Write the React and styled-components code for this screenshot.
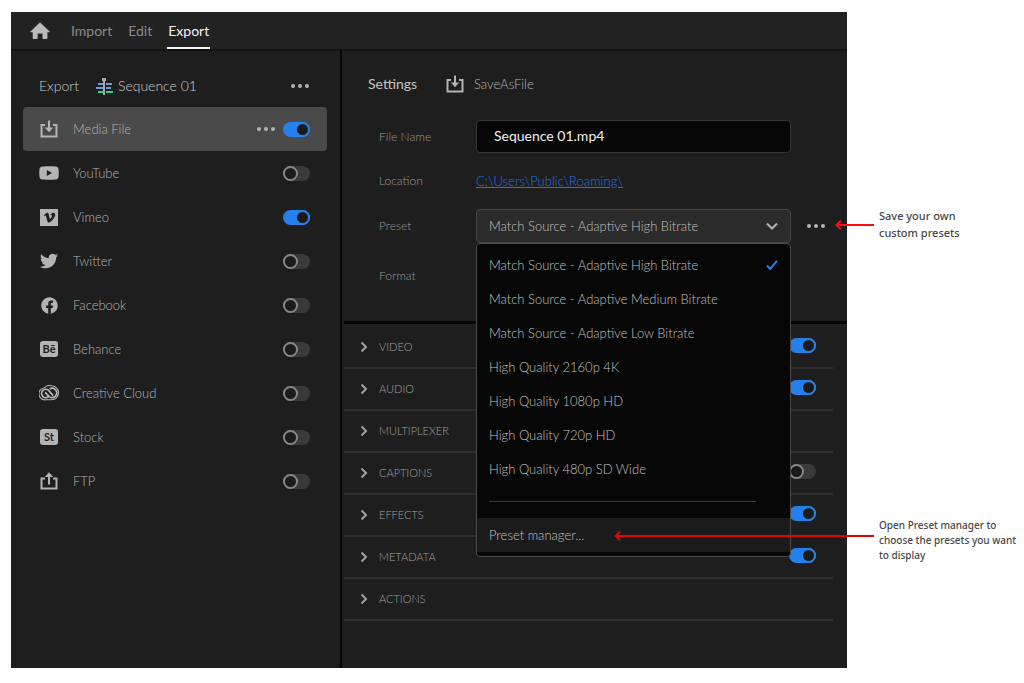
import React, { useState } from 'react';
import styled, { createGlobalStyle } from 'styled-components';
import { FaFacebook, FaTwitter, FaVimeoV } from 'react-icons/fa';

const sans = "Lato, 'Open Sans', sans-serif";

const GlobalStyle = createGlobalStyle`
  *, *::before {
    box-sizing: border-box;
  }
  body {
    margin: 0;
    background: #fff;
    font-family: ${sans};
    font-size: 13px;
    line-height: 20px;
  }
  button, input, select {
    font-family: inherit;
    font-size: inherit;
    line-height: inherit;
  }
`;

/* icons */

const HomeIcon = () => (
  <svg width='20' height='18' viewBox='0 0 20 18' fill='#b9b9b9' aria-hidden='true'>
    <path d='M10 .6a1 1 0 0 1 .7.3l8.9 8.5c.3.4.1.9-.4.9h-1.8v5.9c0 .5-.3.8-.8.8h-3.4a.7.7 0 0 1-.7-.7v-4.7H7.6v4.7a.7.7 0 0 1-.7.7H3.5c-.5 0-.8-.3-.8-.8v-5.900H.9c-.6 0-.8-.5-.4-.9L9.300.9a1 1 0 0 1 .7-.3z' />
  </svg>
);

const SaveIcon = () => (
  <svg width='18' height='18' viewBox='0 0 18 18' fill='none' stroke='#b4b4b4' strokeWidth='2' aria-hidden='true'>
    <path d='M5 5H1.5v11.500h15V5H13' />
    <path d='M9 .5v9' />
    <path d='M4.800 7.500h8.400L9 12.200z' fill='#b4b4b4' stroke='none' />
  </svg>
);

const UploadIcon = () => (
  <svg width='18' height='18' viewBox='0 0 18 18' fill='none' stroke='#b4b4b4' strokeWidth='2' aria-hidden='true'>
    <path d='M5 6.500H1.5v10h15v-10H13' />
    <path d='M9 4v8.500' />
    <path d='M4.800 5h8.400L9 .3z' fill='#b4b4b4' stroke='none' />
  </svg>
);

const YouTubeIcon = () => (
  <svg width='20' height='14' viewBox='0 0 20 14' aria-hidden='true'>
    <path fill='#b4b4b4' d='M3.400.4C6 .1 14 .1 16.600.4c1.800.2 2.700 1 2.900 2.800.3 2.300.3 5.300 0 7.600-.2 1.800-1.100 2.600-2.900 2.800-2.600.3-10.600.3-13.200 0C1.600 13.400.7 12.600.5 10.800.2 8.500.2 5.500.5 3.200.7 1.400 1.600.6 3.400.4z' />
    <path fill='#1e1e1e' d='M7.800 4l5.200 3-5.200 3z' />
  </svg>
);

const CloudIcon = () => (
  <svg width='20' height='16' viewBox='0 0 20 16' fill='none' stroke='#b4b4b4' aria-hidden='true'>
    <path strokeWidth='1.1' d='M6.500 14.800A5.900 5.900 0 0 1 5.200 3 6.800 6.800 0 0 1 12.400.8a7 7 0 0 1 .2 14z' />
    <path strokeWidth='1.7' d='M9.800 11.300a4.200 4.200 0 1 1-.2-5.900l4.600 5.200' />
    <path strokeWidth='1.7' d='M6 7.400l4.300 4.200a4.600 4.600 0 1 0 .3-7.600' />
  </svg>
);

const SequenceIcon = () => (
  <svg width='17' height='17' viewBox='0 0 17 17' aria-hidden='true'>
    <path fill='#6f9bd8' d='M2 5h5v2H2zM10 5h6v2h-6zM0 9h7v2H0zM10 9h5v2h-5z' />
    <path fill='#2fd08a' d='M2 13h5v2H2zM10 13h7v2h-7z' />
    <path fill='#a9a9a9' d='M6 0h4v3H6zM7 3h2v14H7z' />
  </svg>
);

const DotsIcon = () => (
  <svg width='18' height='4' viewBox='0 0 18 4' fill='#b4b4b4' aria-hidden='true'>
    <circle cx='2' cy='2' r='2' />
    <circle cx='9' cy='2' r='2' />
    <circle cx='16' cy='2' r='2' />
  </svg>
);

const ChevronRight = () => (
  <svg width='8' height='12' viewBox='0 0 8 12' fill='none' stroke='#a2a2a2' strokeWidth='2' aria-hidden='true'>
    <path d='M1.500 1.500L6 6l-4.500 4.500' />
  </svg>
);

const ChevronDown = () => (
  <svg width='12' height='8' viewBox='0 0 12 8' fill='none' stroke='#b4b4b4' strokeWidth='2' aria-hidden='true'>
    <path d='M1 1.500l5 5 5-5' />
  </svg>
);

const CheckIcon = () => (
  <svg width='12' height='10' viewBox='0 0 12 10' fill='none' stroke='#2680eb' strokeWidth='2' aria-hidden='true'>
    <path d='M1 5.500L4.300 9 11 .8' />
  </svg>
);

const Arrow = ({ length, color }) => (
  <svg width={length} height='10' viewBox={`0 0 ${length} 10`} fill='none' stroke={color} strokeWidth='2' aria-hidden='true'>
    <path d={`M1 5H${length}`} />
    <path d='M6 .5L1.500 5 6 9.500' />
  </svg>
);

const destinations = [
  { name: 'Media File', icon: <SaveIcon />, on: true, selected: true },
  { name: 'YouTube', icon: <YouTubeIcon /> },
  { name: 'Vimeo', icon: 'vimeo', on: true },
  { name: 'Twitter', icon: <FaTwitter size={18} /> },
  { name: 'Facebook', icon: <FaFacebook size={17} /> },
  { name: 'Behance', badge: 'Bē' },
  { name: 'Creative Cloud', icon: <CloudIcon /> },
  { name: 'Stock', badge: 'St' },
  { name: 'FTP', icon: <UploadIcon /> },
];

const presets = [
  'Match Source - Adaptive High Bitrate',
  'Match Source - Adaptive Medium Bitrate',
  'Match Source - Adaptive Low Bitrate',
  'High Quality 2160p 4K',
  'High Quality 1080p HD',
  'High Quality 720p HD',
  'High Quality 480p SD Wide',
];

const sections = [
  { name: 'VIDEO', on: true },
  { name: 'AUDIO', on: true },
  { name: 'MULTIPLEXER' },
  { name: 'CAPTIONS', on: false },
  { name: 'EFFECTS', on: true },
  { name: 'METADATA', on: true },
  { name: 'ACTIONS' },
];

const App = () => {
  const [preset, setPreset] = useState(presets[0]);

  return (
    <>
      <GlobalStyle />
      <Page>
        <Window>
          <TopBar>
            <HomeButton aria-label='Home'>
              <HomeIcon />
            </HomeButton>
            <Tab href='#import'>Import</Tab>
            <Tab href='#edit'>Edit</Tab>
            <Tab href='#export' $active>Export</Tab>
          </TopBar>
          <Body>
            <Sidebar>
              <SidebarHeader>
                <span>Export</span>
                <SequenceName>
                  <SequenceIcon />
                  Sequence 01
                </SequenceName>
                <IconButton aria-label='Export options'>
                  <DotsIcon />
                </IconButton>
              </SidebarHeader>
              {destinations.map(({ name, icon, badge, on, selected }, i) => (
                <Destination key={name} $selected={selected}>
                  <DestinationIcon>
                    {badge && <Badge>{badge}</Badge>}
                    {icon === 'vimeo' ? (
                      <VimeoSquare>
                        <FaVimeoV size={13} />
                      </VimeoSquare>
                    ) : (
                      icon
                    )}
                  </DestinationIcon>
                  <DestinationName htmlFor={`dest-${i}`}>{name}</DestinationName>
                  {selected && (
                    <IconButton aria-label='Media File options'>
                      <DotsIcon />
                    </IconButton>
                  )}
                  <Toggle type='checkbox' id={`dest-${i}`} defaultChecked={on} />
                </Destination>
              ))}
            </Sidebar>
            <Main>
              <SettingsHeader>
                <Title>Settings</Title>
                <SaveIcon />
                <span>SaveAsFile</span>
              </SettingsHeader>
              <Form>
                <Label htmlFor='filename'>File Name</Label>
                <TextInput id='filename' defaultValue='Sequence 01.mp4' />
                <Label as='span'>Location</Label>
                <PathLink href='#location'>C:\Users\Public\Roaming\</PathLink>
                <Label htmlFor='preset'>Preset</Label>
                <PresetField>
                  <Select id='preset' value={preset} onChange={(e) => setPreset(e.target.value)}>
                    {presets.map((p) => (
                      <option key={p}>{p}</option>
                    ))}
                  </Select>
                  <SelectArrow>
                    <ChevronDown />
                  </SelectArrow>
                  <Menu>
                    {presets.map((p) => (
                      <MenuItem key={p} onClick={() => setPreset(p)}>
                        {p}
                        {p === preset && <CheckIcon />}
                      </MenuItem>
                    ))}
                    <MenuDivider />
                    <MenuItem $raised>Preset manager...</MenuItem>
                  </Menu>
                </PresetField>
                <IconButton aria-label='Preset options'>
                  <DotsIcon />
                </IconButton>
                <Label as='span'>Format</Label>
              </Form>
              <Sections>
                {sections.map(({ name, on }) => (
                  <Section key={name}>
                    <SectionButton id={`section-${name}`}>
                      <ChevronRight />
                      {name}
                    </SectionButton>
                    {on !== undefined && (
                      <Toggle type='checkbox' aria-labelledby={`section-${name}`} defaultChecked={on} />
                    )}
                  </Section>
                ))}
              </Sections>
            </Main>
          </Body>
        </Window>
        <Notes>
          <Note>
            <NoteArrow>
              <Arrow length={39} color='#fb0d0d' />
            </NoteArrow>
            Save your own custom presets
          </Note>
          <Note $small>
            <NoteArrow>
              <Arrow length={260} color='#e00505' />
            </NoteArrow>
            Open Preset manager to choose the presets you want to display
          </Note>
        </Notes>
      </Page>
    </>
  );
};

const Page = styled.div`
  display: grid;
  grid-template-columns: minmax(0, 1fr) 177px;
  min-height: 100vh;
  padding: 12px 0 15px 11px;
`;

const Window = styled.div`
  display: flex;
  flex-direction: column;
  background: #1e1e1e;
  color: #b4b4b4;
  font-weight: 300;
`;

const TopBar = styled.nav`
  display: flex;
  align-items: stretch;
  gap: 14px;
  height: 39px;
  padding-left: 19px;
  background: #222;
  border-bottom: 2px solid #121212;
`;

const Tab = styled.a`
  padding: 9px 1px 6px;
  color: ${({ $active }) => ($active ? '#f2f2f2' : '#8a8a8a')};
  border-bottom: 2px solid ${({ $active }) => ($active ? '#f2f2f2' : 'transparent')};
  font-size: 14px;
  font-weight: 400;
  text-decoration: none;
`;

const IconButton = styled.button`
  display: flex;
  align-items: center;
  padding: 0;
  background: none;
  border: 0;
`;

const HomeButton = styled(IconButton)`
  margin-right: 6px;
`;

const Body = styled.div`
  display: flex;
  flex: 1;
`;

const Sidebar = styled.aside`
  width: 331px;
  padding: 14px 13px 0 12px;
  border-right: 2px solid #060606;
`;

const SidebarHeader = styled.header`
  display: flex;
  align-items: center;
  gap: 17px;
  height: 42px;
  padding: 0 18px 0 16px;
  color: #cdcdcd;
  font-size: 14px;
`;

const SequenceName = styled.span`
  display: flex;
  flex: 1;
  align-items: center;
  gap: 5px;
`;

const Destination = styled.div`
  display: flex;
  align-items: center;
  gap: 8px;
  height: 44px;
  padding: 0 17px 0 16px;
  border-radius: 4px;
  background: ${({ $selected }) => ($selected ? '#4a4a4a' : 'transparent')};
`;

const DestinationIcon = styled.span`
  display: flex;
  justify-content: center;
  width: 20px;
  color: #b4b4b4;
`;

const Badge = styled.span`
  width: 18px;
  border-radius: 3px;
  background: #b4b4b4;
  color: #1e1e1e;
  font-size: 11px;
  font-weight: 700;
  line-height: 16px;
  text-align: center;
`;

const VimeoSquare = styled.span`
  display: flex;
  align-items: center;
  justify-content: center;
  width: 18px;
  height: 17px;
  background: #b4b4b4;
  color: #1e1e1e;
`;

const DestinationName = styled.label`
  flex: 1;
  padding-left: 6px;
`;

const Toggle = styled.input`
  appearance: none;
  flex: none;
  width: 27px;
  height: 15px;
  margin: 0;
  border-radius: 8px;
  background: #3a3a3a;
  &::before {
    content: '';
    display: block;
    width: 15px;
    height: 15px;
    border: 2px solid #868686;
    border-radius: 50%;
    background: #1a1a1a;
  }
  &:checked {
    background: #2680eb;
  }
  &:checked::before {
    margin-left: 12px;
    border-color: #2680eb;
  }
`;

const Main = styled.main`
  flex: 1;
  padding: 15px 0 0 2px;
`;

const SettingsHeader = styled.header`
  display: flex;
  align-items: center;
  gap: 10px;
  height: 36px;
  padding-left: 24px;
`;

const Title = styled.h1`
  width: 68px;
  margin: 0;
  color: #c4c4c4;
  font-size: 14px;
  font-weight: 400;
`;

const Form = styled.div`
  display: grid;
  grid-template-columns: 97px minmax(0, 1fr) 22px;
  grid-template-rows: 33px 56px 33px 67px;
  align-items: center;
  margin-top: 18px;
  padding: 0 18px 12px 35px;
`;

const Label = styled.label`
  grid-column: 1;
  color: #999;
  font-size: 12px;
`;

const TextInput = styled.input`
  height: 33px;
  margin-right: 16px;
  padding: 0 17px 2px;
  border: 1px solid #363636;
  border-radius: 4px;
  background: #060606;
  color: #f0f0f0;
  font-size: 14px;
  font-weight: 400;
`;

const PathLink = styled.a`
  color: #1f74e6;
`;

const PresetField = styled.div`
  position: relative;
  margin-right: 16px;
`;

const Select = styled.select`
  appearance: none;
  display: block;
  width: 100%;
  height: 34px;
  padding: 0 12px;
  border: 1px solid #444;
  border-radius: 4px;
  background: #2b2b2b;
  color: #c0c0c0;
  font-weight: 300;
`;

const SelectArrow = styled.span`
  position: absolute;
  top: 13px;
  right: 13px;
  display: flex;
  pointer-events: none;
`;

const Menu = styled.div`
  position: absolute;
  top: 100%;
  left: 0;
  z-index: 1;
  width: 100%;
  padding: 4px 0;
  border: 1px solid #4a4a4a;
  border-radius: 4px;
  background: #070707;
`;

const MenuItem = styled.button`
  display: flex;
  align-items: center;
  justify-content: space-between;
  width: 100%;
  height: 34px;
  padding: 0 12px;
  border: 0;
  background: ${({ $raised }) => ($raised ? '#1b1b1b' : 'none')};
  color: #c0c0c0;
  font-weight: 300;
  text-align: left;
`;

const MenuDivider = styled.hr`
  margin: 15px 34px 16px 12px;
  border: 0;
  border-top: 1px solid #3c3c3c;
`;

const Sections = styled.div`
  padding: 3px 14px 0 0;
  border-top: 3px solid #060606;
`;

const Section = styled.div`
  display: flex;
  align-items: center;
  justify-content: space-between;
  height: 42px;
  padding: 0 17px 4px 16px;
  border-bottom: 2px solid #2f2f2f;
`;

const SectionButton = styled.button`
  display: flex;
  align-items: center;
  gap: 11px;
  padding: 4px 0 0;
  border: 0;
  background: none;
  color: #a0a0a0;
  font-size: 11px;
  font-weight: 300;
`;

const Notes = styled.aside`
  display: flex;
  flex-direction: column;
  gap: 277px;
  padding: 195px 4px 0 32px;
`;

const Note = styled.p`
  position: relative;
  max-width: ${({ $small }) => ($small ? '141px' : '96px')};
  margin: 0;
  color: #484848;
  font-family: 'Noto Sans', sans-serif;
  font-size: ${({ $small }) => ($small ? '10px' : '11px')};
  font-weight: 500;
  line-height: ${({ $small }) => ($small ? '15px' : '17px')};
`;

const NoteArrow = styled.span`
  position: absolute;
  top: 18px;
  right: calc(100% + 5px);
  z-index: 2;
  display: flex;
  transform: translateY(-50%);
`;

export default App;
